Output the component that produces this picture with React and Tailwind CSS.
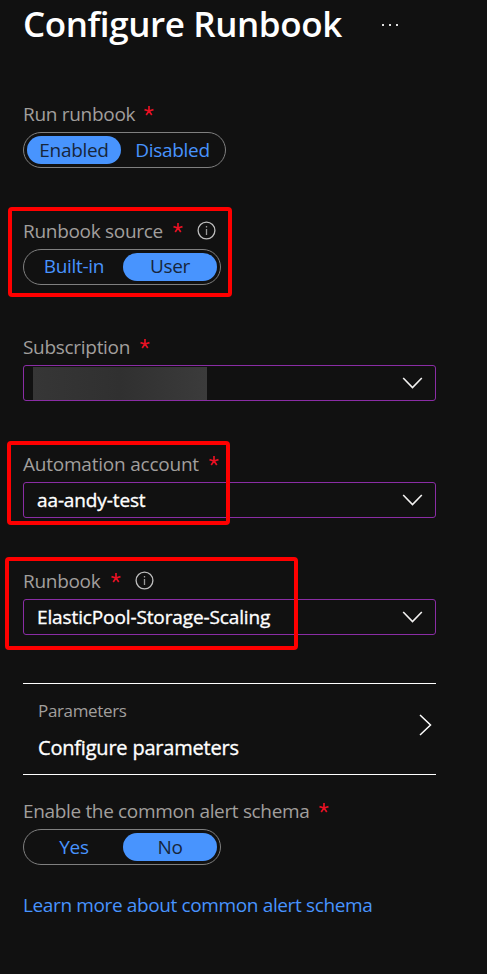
import React from "react";

function Star() {
  return (
    <svg className="mb-[7px] ml-px shrink-0" width="10" height="10" viewBox="0 0 10 10" fill="none" stroke="#e81123" strokeWidth="1.7">
      <path d="M5 0V5M5 5L.5 3.6M5 5L9.5 3.6M5 5L2.2 9M5 5L7.8 9" />
    </svg>
  );
}

function Info() {
  return (
    <svg className="mb-px ml-3.5 shrink-0" width="19" height="19" viewBox="0 0 19 19" fill="none" stroke="#bdbdbd">
      <circle cx="9.5" cy="9.5" r="8.4" strokeWidth="1.3" />
      <path d="M9.5 8v6M9.5 5v1.5" stroke="#999999" strokeWidth="1.3" />
    </svg>
  );
}

function Label({ text, className, info }) {
  return (
    <div className="flex h-7 items-center">
      <span className={`shrink-0 text-[#a19f9d] ${className}`}>{text}</span>
      <Star />
      {info && <Info />}
    </div>
  );
}

function Toggle({ left, right, leftOn, width, className = "" }) {
  const on = "bg-[#4894fe] text-[#17263b]";
  const off = "text-[#4894fe]";
  return (
    <div className={`mt-1 flex h-9 items-center gap-0.5 rounded-full border border-[#7f7f7f] px-[3px] ${width}`}>
      <div className={`flex h-7 w-[94px] items-center justify-center rounded-full ${leftOn ? on : off}`}>
        <span className={className}>{left}</span>
      </div>
      <div className={`flex h-7 flex-1 items-center justify-center rounded-full ${leftOn ? off : on}`}>
        <span className={className}>{right}</span>
      </div>
    </div>
  );
}

function Select({ children }) {
  return (
    <div className="mt-1 flex h-9 items-center justify-between rounded-[3px] border border-[#8a2da5] pr-3">
      {children}
      <svg width="21" height="12" viewBox="0 0 21 12" fill="none" stroke="#f3f2f1" strokeWidth="1.6">
        <path d="M1.2 1L10.5 10.5L19.8 1" />
      </svg>
    </div>
  );
}

function Value({ children }) {
  return <span className="pl-[13px] tracking-[-0.12px] text-white [-webkit-text-stroke:0.35px_white]">{children}</span>;
}

function Highlight({ className }) {
  return <div className={`pointer-events-none absolute rounded-[4px] border-4 border-[#ff0000] ${className}`} />;
}

export default function App() {
  return (
    <main className="h-[974px] w-[487px] overflow-hidden bg-[#111111] pl-[23px] font-['Open_Sans','Noto_Sans',sans-serif] text-[19px] leading-7 tracking-[-0.3px]">
      <header className="flex h-[50px] items-center">
        <h1 className="w-[359px] whitespace-nowrap pb-0.5 text-[35px] font-semibold leading-[48px] tracking-[-0.4px] text-white">Configure Runbook</h1>
        <div className="flex gap-[5px]">
          <i className="size-0.5 bg-[#e0e0e0]" />
          <i className="size-0.5 bg-[#e0e0e0]" />
          <i className="size-0.5 bg-[#e0e0e0]" />
        </div>
      </header>
      <div className="flex w-[413px] flex-col whitespace-nowrap pt-[50px]">
        <section>
          <Label text="Run runbook" className="w-[120px]" />
          <Toggle left="Enabled" right="Disabled" leftOn width="w-[203px]" />
        </section>
        <section className="relative mt-[49px]">
          <Label text="Runbook source" className="w-[149px]" info />
          <Toggle left="Built-in" right="User" width="w-[198px]" className="pb-0.5" />
          <Highlight className="-left-[15px] -top-[10px] h-[90px] w-[224px]" />
        </section>
        <section className="mt-12">
          <Label text="Subscription" className="w-[116px]" />
          <Select>
            <div className="ml-[9px] h-[33px] w-[174px] bg-linear-to-r from-[#363636] via-[#303030] to-[#3b3b3b]" />
          </Select>
        </section>
        <section className="relative mt-[49px]">
          <Label text="Automation account" className="w-[185px] tracking-[-0.22px]" />
          <Select><Value>aa-andy-test</Value></Select>
          <Highlight className="-left-4 -top-[9px] h-[84px] w-[223px]" />
        </section>
        <section className="relative mt-[49px]">
          <Label text="Runbook" className="w-[87px]" info />
          <Select><Value>ElasticPool-Storage-Scaling</Value></Select>
          <Highlight className="-left-[18px] -top-[10px] h-[93px] w-[293px]" />
        </section>
        <section className="mt-12 flex h-[92px] items-center justify-between border-y border-white pl-[15px] pr-1">
          <div className="flex flex-col gap-[9px] pt-px">
            <span className="text-[17px] tracking-[-0.35px] text-[#a19f9d]">Parameters</span>
            <span className="text-[20px] tracking-[-0.2px] text-white [-webkit-text-stroke:0.35px_white]">Configure parameters</span>
          </div>
          <svg className="mb-[9px]" width="13" height="22" viewBox="0 0 13 22" fill="none" stroke="#ffffff" strokeWidth="1.5">
            <path d="M1 1L11.5 11L1 21" />
          </svg>
        </section>
        <section className="mt-[22px]">
          <Label text="Enable the common alert schema" className="w-[295px] tracking-[-0.34px]" />
          <Toggle left="Yes" right="No" width="w-[198px]" />
        </section>
        <a className="mt-[26px] tracking-[-0.37px] text-[#4894fe]">Learn more about common alert schema</a>
      </div>
    </main>
  );
}
